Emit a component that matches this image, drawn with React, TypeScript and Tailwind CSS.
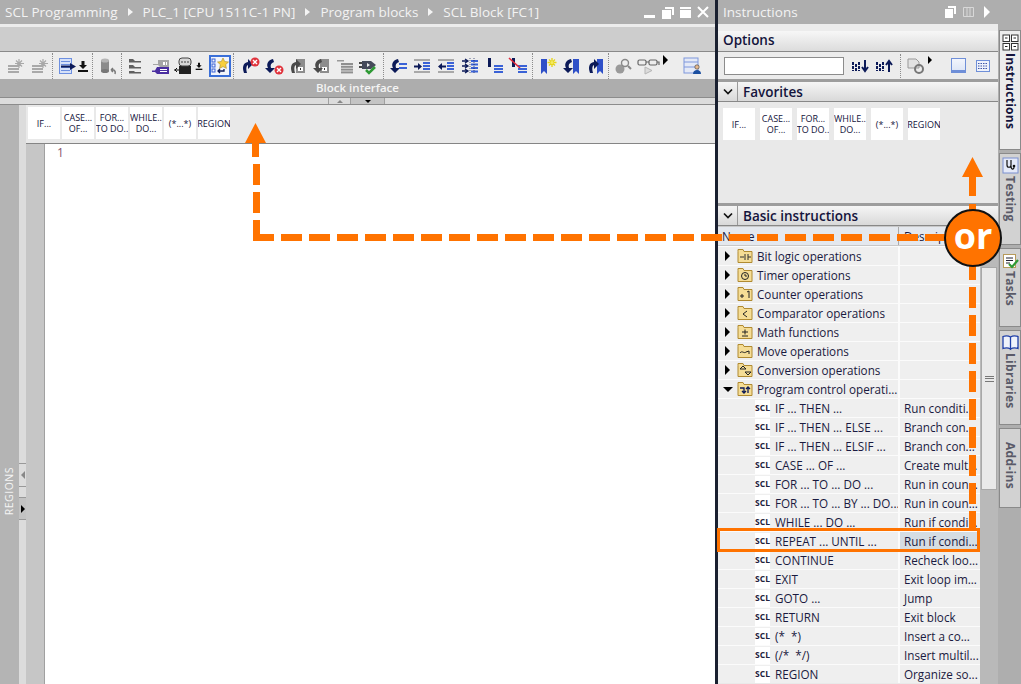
import type { ReactNode } from "react";

const NAVY = "#0c1a58";
const BLUE = "#3a62d6";

const Ico = ({ children, w = 24 }: { children: ReactNode; w?: number }) => (
  <svg width={w} height={20} viewBox={`0 0 ${w} 20`} className="block shrink-0">
    {children}
  </svg>
);

const Rows = ({ x, y, w, n = 3, gap = 4, h = 2, c = BLUE }: { x: number; y: number; w: number; n?: number; gap?: number; h?: number; c?: string }) => (
  <>
    {Array.from({ length: n }).map((_, i) => (
      <rect key={i} x={x} y={y + i * gap} width={w} height={h} fill={c} />
    ))}
  </>
);

const Badge = ({ x, y }: { x: number; y: number }) => (
  <>
    <circle cx={x} cy={y} r={4.5} fill="#e0333c" />
    <path d={`M${x - 2} ${y - 2}l4 4m0-4l-4 4`} stroke="#fff" strokeWidth={1.4} />
  </>
);

// curved arrows for the step/bookmark buttons
const CurveUp = ({ x = 0, y = 0, c = NAVY }: { x?: number; y?: number; c?: string }) => (
  <path transform={`translate(${x} ${y})`} d="M4 17C2 11 3 7 8 6V3l5 5-5 5V9C6 10 6 13 7 17z" fill={c} />
);
const CurveDown = ({ x = 0, y = 0, c = NAVY }: { x?: number; y?: number; c?: string }) => (
  <path transform={`translate(${x} ${y})`} d="M9 3C4 4 2 8 4 12H1l5 5 5-5H7C6 9 7 7 10 6z" fill={c} />
);

const Ghost = () => (
  <Ico>
    <Rows x={5} y={9} w={11} gap={3} h={2} c="#a9a9a9" />
    <path d="M16 3v9M12 7.500h9M13 4.500l6 6m0-6l-6 6" stroke="#a8a8a8" strokeWidth={1.2} />
  </Ico>
);

const Down = () => (
  <svg width={12} height={20} viewBox="0 0 12 20" className="block">
    <path d="M4.500 5h3v4H10l-4 4-4-4h2.500z" fill="#111" />
    <rect x={1} y={14} width={10} height={2} fill="#111" />
  </svg>
);

const DocArrow = () => (
  <svg width={20} height={20} viewBox="0 0 20 20" className="block">
    <rect x={2.500} y={2.500} width={12} height={15} fill="#d6e1f8" stroke="#6d8fe0" />
    <Rows x={4} y={5} w={9} n={4} gap={3} h={1} c="#6d8fe0" />
    <path d="M4 9.500h9V7l6 3.500-6 3.500v-2.500H4z" fill={NAVY} />
  </svg>
);

const Cyl = () => (
  <Ico>
    <rect x={5} y={4} width={8} height={11} fill="#8b8b8b" />
    <ellipse cx={9} cy={4.500} rx={4} ry={2} fill="#b5b5b5" />
    <ellipse cx={9} cy={15} rx={4} ry={2} fill="#777" />
    <path d="M19 18c1-3-1-5-4-4M15 14l2-2m-2 2l2 2" stroke="#777" strokeWidth={1.5} fill="none" />
  </Ico>
);

const GreyLines = () => (
  <Ico>
    <path d="M4 3h4l2 2h6v1.500H4zM4 9h4l2 2h6v1.500H4zM4 15h5l1 1h6v1.500H4z" fill="#5f5f5f" />
  </Ico>
);

const Tag = () => (
  <Ico>
    <path d="M9 4h11v7H11l-2-2H4V8h5z" fill="#a5a5a5" />
    <rect x={14} y={6} width={2} height={3} fill="#fff" />
    <rect x={17} y={6} width={1} height={3} fill="#fff" />
    <path d="M8 11h12v7H8l-2-2H3v-1.500h3z" fill="#4a2ea0" />
    <Rows x={11} y={13} w={7} n={2} gap={2} h={1} c="#fff" />
  </Ico>
);

const Speech = () => (
  <svg width={22} height={20} viewBox="0 0 22 20" className="block">
    <rect x={6} y={10} width={12} height={8} fill="#222" />
    <rect x={6} y={2} width={12} height={8} rx={3} fill="#d8d8d8" stroke="#444" />
    <path d="M8.500 6h1m2 0h1m2 0h1" stroke="#111" strokeWidth={1.5} />
    <path d="M1 14h5m-2-2l-2 2 2 2" stroke="#111" strokeWidth={1} fill="none" />
  </svg>
);

const StarList = () => (
  <div className="flex h-[22px] w-[22px] items-center justify-center border-2 border-[#3a6fd8] bg-[#f2f5fb]">
    <svg width={18} height={18} viewBox="0 0 18 18" className="block">
      <rect x={1} y={2} width={3} height={3} fill="none" stroke={BLUE} />
      <rect x={1} y={7} width={3} height={3} fill="none" stroke={BLUE} />
      <rect x={1} y={12} width={3} height={3} fill="none" stroke={BLUE} />
      <path d="M12 1l1.700 3.500 3.800.5-2.800 2.600.7 3.800L12 9.600 8.600 11.400l.7-3.800L6.500 5l3.800-.5z" fill="#f7cf3c" stroke="#a78a2a" strokeWidth={0.6} />
      <path d="M13 12v2H7m2-2l-2 2 2 2" stroke={NAVY} strokeWidth={1.3} fill="none" />
    </svg>
  </div>
);

const StepOut = () => (
  <Ico>
    <CurveUp x={3} />
    <Badge x={18} y={6} />
  </Ico>
);

const StepIn = () => (
  <Ico>
    <CurveDown x={3} />
    <Badge x={18} y={14} />
  </Ico>
);

const GreyBlock = ({ down }: { down?: boolean }) => (
  <Ico>
    <rect x={11} y={3} width={9} height={14} fill="#8d8d8d" />
    <rect x={13} y={11} width={5} height={4} fill="#fff" />
    <rect x={15} y={12} width={1} height={2} fill="#333" />
    {down ? <CurveDown x={3} c="#4a4a4a" /> : <CurveUp x={3} c="#4a4a4a" />}
  </Ico>
);

const Plug = () => (
  <Ico>
    <path d="M5 5h9l5 4-5 4H5z" fill="#454a5a" />
    <path d="M2 7h3M2 11h3" stroke="#111" strokeWidth={1.3} />
    <path d="M10 7l3 2-3 2z" fill="#eee" />
    <path d="M9 14l3 3 6-6" stroke="#2e9a35" strokeWidth={2.500} fill="none" />
  </Ico>
);

const CurveRows = () => (
  <Ico>
    <CurveDown x={3} />
    <Rows x={13} y={7} w={8} n={2} gap={4} h={2} c={BLUE} />
  </Ico>
);

const Indent = ({ left }: { left?: boolean }) => (
  <Ico>
    <rect x={4} y={3} width={16} height={2} fill="#a9a9a9" />
    <rect x={4} y={15} width={16} height={2} fill="#a9a9a9" />
    <Rows x={13} y={6} w={7} n={3} gap={3} h={2} c={BLUE} />
    <path d={left ? "M4 10.500l4-3.500v2.500h4v2H8V14z" : "M12 10.500L8 7v2.500H4v2h4V14z"} fill={NAVY} />
  </Ico>
);

const Align = () => (
  <Ico>
    <path d="M4 5h6m-3-2l3 2-3 2M4 10h6m-3-2l3 2-3 2M4 15h6m-3-2l3 2-3 2" stroke={NAVY} strokeWidth={1.3} fill="none" />
    <Rows x={13} y={4} w={7} n={4} gap={3.500} h={2} c={BLUE} />
    <path d="M12 2v16M16 2v16" stroke={NAVY} strokeWidth={0.7} strokeDasharray="1 1" />
  </Ico>
);

const LineRows = ({ red }: { red?: boolean }) => (
  <Ico>
    <rect x={6} y={2} width={3} height={9} fill={NAVY} />
    <Rows x={12} y={9} w={9} n={3} gap={3} h={2} />
    {red && <path d="M3 2l11 10" stroke="#e0283a" strokeWidth={1.6} />}
  </Ico>
);

const Ribbon = ({ x, c = "#2f50c8" }: { x: number; c?: string }) => (
  <path d={`M${x} 3h6v15l-3-3-3 3z`} fill={c} />
);

const RibbonNew = () => (
  <Ico>
    <Ribbon x={6} />
    <path d="M17 2v9M12.500 6.500h9M14 3.500l6 6m0-6l-6 6" stroke="#e6d51e" strokeWidth={1.4} />
    <circle cx={17} cy={6.500} r={1.500} fill="#f5ea60" />
  </Ico>
);

const RibbonBack = () => (
  <Ico>
    <Ribbon x={14} />
    <CurveDown x={3} />
  </Ico>
);

const RibbonFwd = () => (
  <Ico>
    <Ribbon x={14} />
    <CurveUp x={3} />
  </Ico>
);

const Magnify = () => (
  <Ico>
    <circle cx={9} cy={13} r={4.500} fill="#9a9a9a" />
    <circle cx={14} cy={7} r={3.500} fill="#eee" stroke="#888" strokeWidth={1.4} />
    <path d="M17 10l3 3" stroke="#888" strokeWidth={2} />
  </Ico>
);

const Glasses = () => (
  <Ico w={26}>
    <rect x={3} y={4} width={8} height={5} rx={1.500} fill="none" stroke="#666" strokeWidth={1.2} />
    <rect x={14} y={4} width={8} height={5} rx={1.500} fill="none" stroke="#666" strokeWidth={1.2} />
    <path d="M11 6h3M22 6h2v3" stroke="#666" strokeWidth={1.2} fill="none" />
    <path d="M10 11l7 3.500-7 3.500z" fill="#dcdcdc" stroke="#b5b5b5" />
  </Ico>
);

const Person = () => (
  <Ico>
    <rect x={4} y={2} width={14} height={15} fill="#e4e9f6" stroke="#7e97dc" />
    <path d="M4 6h14M4 11h14" stroke="#7e97dc" />
    <circle cx={17} cy={11} r={2.200} fill="#e6b98f" stroke="#222" strokeWidth={0.5} />
    <path d="M13 18c0-3 2-4 4-4s4 1 4 4z" fill="#1b4fa0" />
  </Ico>
);

const Sep = ({ className }: { className: string }) => (
  <div className={`h-[26px] w-px border-l border-dotted border-[#8b8b8b] ${className}`} />
);

const Slot = ({ children, className = "w-[24px]" }: { children: ReactNode; className?: string }) => (
  <div className={`flex shrink-0 items-center justify-center ${className}`}>{children}</div>
);

const TopArrow = () => <div className="mb-[12px] h-0 w-0 border-y-[5px] border-l-[5px] border-y-transparent border-l-black" />;

const Toolbar = () => (
  <div className="flex h-[28px] items-center border-t border-[#8a8a8a] bg-[#ededed] pl-[3px]">
    <Slot><Ghost /></Slot>
    <Slot><Ghost /></Slot>
    <Sep className="ml-[1px]" />
    <Slot className="ml-[4px] w-[20px]"><DocArrow /></Slot>
    <Slot className="w-[12px]"><Down /></Slot>
    <Sep className="ml-[3px]" />
    <Slot className="ml-[3px] w-[24px]"><Cyl /></Slot>
    <Sep className="ml-[1px]" />
    <Slot className="ml-[3px] w-[24px]"><GreyLines /></Slot>
    <Slot><Tag /></Slot>
    <Slot className="w-[22px]"><Speech /></Slot>
    <Slot className="w-[8px]"><Down /></Slot>
    <Slot className="ml-[6px] w-[22px]"><StarList /></Slot>
    <Sep className="ml-[2px]" />
    <Slot className="ml-[3px] w-[24px]"><StepOut /></Slot>
    <Slot><StepIn /></Slot>
    <Slot><GreyBlock /></Slot>
    <Slot><GreyBlock down /></Slot>
    <Slot>
      <Ico>
        <path d="M4 4h7v1.500H4z" fill="#999" />
        <Rows x={8} y={7} w={12} n={4} gap={2.800} h={2} c="#8f8f8f" />
      </Ico>
    </Slot>
    <Slot><Plug /></Slot>
    <Sep className="ml-[2px]" />
    <Slot className="ml-[2px] w-[24px]"><CurveRows /></Slot>
    <Slot><Indent /></Slot>
    <Slot><Indent left /></Slot>
    <Slot><Align /></Slot>
    <Slot><LineRows /></Slot>
    <Slot><LineRows red /></Slot>
    <Sep className="ml-[2px]" />
    <Slot className="ml-[2px] w-[24px]"><RibbonNew /></Slot>
    <Slot><RibbonBack /></Slot>
    <Slot><RibbonFwd /></Slot>
    <Sep className="ml-[1px]" />
    <Slot className="ml-[2px] w-[24px]"><Magnify /></Slot>
    <Slot className="ml-[1px] w-[24px]"><Glasses /></Slot>
    <Slot className="w-[10px]"><TopArrow /></Slot>
    <Slot className="ml-[10px] w-[24px]"><Person /></Slot>
  </div>
);

const Tile = ({ top, bottom }: { top: string; bottom?: string }) => (
  <div className="flex h-[32px] w-[32px] shrink-0 flex-col items-center justify-center overflow-hidden bg-white text-center text-[9px] leading-[11px] text-[#14143c]">
    <span className="whitespace-nowrap">{top}</span>
    {bottom && <span className="whitespace-nowrap">{bottom}</span>}
  </div>
);

const Tiles = ({ gap }: { gap: string }) => (
  <div className={`flex ${gap}`}>
    <Tile top="IF..." />
    <Tile top="CASE..." bottom="OF..." />
    <Tile top="FOR..." bottom="TO DO.." />
    <Tile top="WHILE.." bottom="DO..." />
    <Tile top="(*...*)" />
    <Tile top="REGION" />
  </div>
);

const TitleArrow = () => <span className="block h-0 w-0 border-y-[4px] border-l-[5px] border-y-transparent border-l-[#f4f4f4]" />;

const Editor = () => (
  <div className="flex h-full w-[715px] shrink-0 flex-col">
    <div className="flex h-[24px] items-center justify-between bg-[#aeaeae] pl-[5px] pr-[6px] text-[13.500px] text-[#f3f3f3]">
      <div className="flex items-center whitespace-nowrap">
        <span>SCL Programming</span>
        <span className="mx-[10px]"><TitleArrow /></span>
        <span>PLC_1 [CPU 1511C-1 PN]</span>
        <span className="mx-[10px]"><TitleArrow /></span>
        <span>Program blocks</span>
        <span className="mx-[10px]"><TitleArrow /></span>
        <span>SCL Block [FC1]</span>
      </div>
      <div className="flex items-center gap-[6px]">
        <svg width={66} height={14} viewBox="0 0 66 14" className="block">
          <rect x={1} y={10} width={11} height={3} fill="#fff" />
          <path d="M22 2h9v8h-2V4h-7z" fill="#fff" />
          <rect x={19} y={5} width={9} height={9} fill="#fff" />
          <rect x={37} y={2} width={11} height={11} fill="#fff" />
          <rect x={37} y={4} width={11} height={1} fill="#aeaeae" />
          <path d="M55 2l10 10m0-10L55 12" stroke="#fff" strokeWidth={2} />
        </svg>
      </div>
    </div>
    <div className="h-[3px] bg-[#ececec]" />
    <div className="h-[24px] bg-[#cdcdcd]" />
    <Toolbar />
    <div className="flex h-[18px] items-center justify-center bg-[#adadad] text-[11.500px] font-semibold text-[#f4f4f4]">Block interface</div>
    <div className="flex h-[8px] items-start border-y border-[#8c8c8c] bg-[#dcdcdc]">
      <div className="ml-[328px] flex h-[6px] w-[23px] items-center justify-center border-x border-[#a0a0a0]">
        <span className="h-0 w-0 border-x-[3px] border-b-[3px] border-x-transparent border-b-[#888]" />
      </div>
      <div className="flex h-[6px] w-[34px] items-center justify-center border-r border-[#a0a0a0] bg-[#c4c4c4]">
        <span className="h-0 w-0 border-x-[3px] border-t-[3px] border-x-transparent border-t-black" />
      </div>
    </div>
    <div className="flex min-h-0 flex-1">
      <div className="flex w-[19px] shrink-0 justify-center bg-[#b4b4b4] pt-[362px]">
        <span className="h-max rotate-180 text-[10.500px] tracking-[0.5px] text-[#f4f4f4] [writing-mode:vertical-rl]">REGIONS</span>
      </div>
      <div className="flex w-[7px] shrink-0 flex-col bg-[#dcdcdc] pt-[358px]">
        <div className="flex h-[23px] items-center justify-center border-t border-[#999]">
          <span className="h-0 w-0 border-y-[4px] border-r-[4px] border-y-transparent border-r-[#888]" />
        </div>
        <div className="h-[11px] border-t border-[#999]" />
        <div className="flex h-[23px] items-center justify-center border-y border-[#999] bg-[#c2c2c2]">
          <span className="h-0 w-0 border-y-[4px] border-l-[4px] border-y-transparent border-l-black" />
        </div>
      </div>
      <div className="flex min-w-0 flex-1 flex-col">
        <div className="h-[39px] border-b border-[#858585] bg-[#e9e9e9] py-[2px] pl-[2px]">
          <Tiles gap="gap-[2px]" />
        </div>
        <div className="flex flex-1">
          <div className="w-[19px] border-r border-[#a0a0a0] bg-[#c6c6c6]" />
          <div className="flex-1 bg-white pl-[12px] pt-[1px] text-[12px] leading-[16px] text-[#86566e]">1</div>
        </div>
      </div>
    </div>
  </div>
);

const Chevron = () => (
  <div className="flex h-full w-[20px] items-center justify-center border-r border-[#9a9a9a]">
    <svg width={10} height={8} viewBox="0 0 10 8" className="block">
      <path d="M1 1.500l4 4 4-4" stroke="#111" strokeWidth={1.7} fill="none" />
    </svg>
  </div>
);

const Section = ({ title }: { title: string }) => (
  <div className="border-t-[3px] border-[#9d9d9d]">
    <div className="flex h-[20px] items-center border-b border-[#888] bg-linear-to-b from-[#f5f5f5] to-[#d9d9d9] text-[13.500px] font-semibold text-[#14143c]">
      <Chevron />
      <span className="pl-[5px] pt-[1px]">{title}</span>
    </div>
  </div>
);

const glyphs: Record<string, ReactNode> = {
  bit: <path d="M3 9h4M8 6v6M11 6v6M11 9h3" stroke="#333" fill="none" />,
  timer: <><circle cx={8} cy={9} r={3.500} fill="none" stroke="#222" /><path d="M8 7v2h2" stroke="#222" fill="none" /></>,
  counter: <path d="M3 10h4M5 8v4M10 6l2-1v7" stroke="#222" fill="none" />,
  comp: <path d="M10 6L6 9l4 3" stroke="#222" fill="none" />,
  math: <path d="M5 8h6M8 5.500v5M5 12h6" stroke="#222" fill="none" />,
  move: <path d="M3 10c2-3 4 1 6-1l3-1m0 0v3" stroke="#222" fill="none" />,
  conv: <path d="M3 7l3-3 3 3zM8 10h6l-3 3z" fill="none" stroke="#222" />,
  prog: <path d="M3 7h4v5m-2-2l2 2 2-2M9 8l2-2 2 2m-2-2v6" stroke={NAVY} fill="none" strokeWidth={1.3} />,
};

const Folder = ({ g }: { g: string }) => (
  <svg width={16} height={16} viewBox="0 0 16 16" className="block shrink-0">
    <path d="M1 3.500V1.500h5l1 2h8v11H1z" fill="#f5dd96" stroke="#b08a30" />
    {glyphs[g]}
  </svg>
);

const folders: [string, string][] = [
  ["bit", "Bit logic operations"],
  ["timer", "Timer operations"],
  ["counter", "Counter operations"],
  ["comp", "Comparator operations"],
  ["math", "Math functions"],
  ["move", "Move operations"],
  ["conv", "Conversion operations"],
  ["prog", "Program control operati..."],
];

const commands: [string, string][] = [
  ["IF ... THEN ...", "Run conditi..."],
  ["IF ... THEN ... ELSE ...", "Branch con..."],
  ["IF ... THEN ... ELSIF ...", "Branch con..."],
  ["CASE ... OF ...", "Create mult..."],
  ["FOR ... TO ... DO ...", "Run in coun..."],
  ["FOR ... TO ... BY ... DO...", "Run in coun..."],
  ["WHILE ... DO ...", "Run if condi..."],
  ["REPEAT ... UNTIL ...", "Run if condi..."],
  ["CONTINUE", "Recheck loo..."],
  ["EXIT", "Exit loop im..."],
  ["GOTO ...", "Jump"],
  ["RETURN", "Exit block"],
  ["(*  *)", "Insert a co..."],
  ["(/*  */)", "Insert multil..."],
  ["REGION", "Organize so..."],
];

const TreeRow = ({ name, desc, open, g, selected }: { name: string; desc?: string; open?: boolean; g?: string; selected?: boolean }) => (
  <div className="flex h-[19px] shrink-0 border-t border-[#fbfbfb] bg-[#efefef] text-[11.700px] leading-[18px] text-[#1a1a40]">
    <div className="flex w-[182px] shrink-0 items-center overflow-hidden whitespace-nowrap border-r-2 border-[#fbfbfb]">
      {g ? (
        <>
          <div className="flex w-[19px] shrink-0 justify-center">
            {open ? (
              <span className="h-0 w-0 border-x-[5px] border-t-[5px] border-x-transparent border-t-black" />
            ) : (
              <span className="h-0 w-0 border-y-[5px] border-l-[5px] border-y-transparent border-l-black" />
            )}
          </div>
          <Folder g={g} />
          <span className="pl-[4px]">{name}</span>
        </>
      ) : (
        <>
          <div className="ml-[37px] flex h-[17px] w-[15px] shrink-0 items-center justify-center bg-white text-[8.500px] font-bold leading-none text-[#22223c]">SCL</div>
          <span className="whitespace-pre pl-[5px]">{name}</span>
        </>
      )}
    </div>
    <div className={`min-w-0 flex-1 overflow-hidden whitespace-nowrap pl-[4px] ${selected ? "bg-[#d5dde3]" : ""}`}>{desc}</div>
  </div>
);

const InstructionsPanel = () => (
  <div className="flex h-full w-[280px] shrink-0 flex-col bg-[#e9e9e9]">
    <div className="flex h-[24px] shrink-0 items-center justify-between bg-[#aeaeae] pl-[5px] pr-[8px] text-[13.500px] text-[#f3f3f3]">
      <span>Instructions</span>
      <svg width={46} height={14} viewBox="0 0 46 14" className="block">
        <path d="M4 1h8v8h-2V3H4z" fill="#fff" />
        <rect x={1} y={4} width={8} height={9} fill="#fff" />
        <path d="M19.500 2.500h10v9h-10zM23 2.500v9M26 2.500v9" stroke="#d8d8d8" fill="none" />
        <path d="M40 1l6 6-6 6z" fill="#fff" />
      </svg>
    </div>
    <div className="h-[7px] shrink-0 bg-[#ececec]" />
    <div className="flex h-[21px] shrink-0 items-center border-b border-[#888] bg-linear-to-b from-[#f7f7f7] to-[#dcdcdc] pb-[2px] pl-[5px] text-[13.500px] font-semibold text-[#14143c]">Options</div>
    <div className="flex h-[27px] shrink-0 items-center bg-[#ececec]">
      <div className="ml-[6px] h-[18px] w-[120px] border border-[#8c8c8c] bg-white" />
      <svg width={22} height={20} viewBox="0 0 22 20" className="ml-[6px] block">
        <path d="M3 6v9M6 8v7M9 6v9" stroke={NAVY} strokeWidth={2} strokeDasharray="3 1" />
        <path d="M15 4v10m-3-3l3 4 3-4" stroke={NAVY} strokeWidth={2} fill="none" />
      </svg>
      <svg width={22} height={20} viewBox="0 0 22 20" className="ml-[2px] block">
        <path d="M3 6v9M6 8v7M9 6v9" stroke={NAVY} strokeWidth={2} strokeDasharray="3 1" />
        <path d="M15 16V6m-3 3l3-4 3 4" stroke={NAVY} strokeWidth={2} fill="none" />
      </svg>
      <div className="ml-[4px] h-[24px] w-px border-l border-dotted border-[#8b8b8b]" />
      <svg width={22} height={20} viewBox="0 0 22 20" className="ml-[4px] block">
        <path d="M3 3h8l3 3v6H3z" fill="#e2e2e2" stroke="#999" />
        <circle cx={14} cy={13} r={4} fill="none" stroke="#777" strokeWidth={2} />
      </svg>
      <div className="mb-[12px] ml-[1px] h-0 w-0 border-y-[4px] border-l-[4px] border-y-transparent border-l-black" />
      <div className="ml-[19px] h-[15px] w-[15px] border border-[#6f8fd8] bg-linear-to-b from-[#f2f5fc] to-[#dbe4f6] shadow-[inset_0_-2px_0_#6f8fd8]" />
      <svg width={16} height={16} viewBox="0 0 16 16" className="ml-[9px] block">
        <rect x={1.500} y={2.500} width={13} height={11} fill="#eef2fb" stroke="#6f8fd8" />
        <path d="M3 5.500h10M3 8h10M3 10.500h10" stroke="#3d55a8" strokeDasharray="1.500 1" />
      </svg>
    </div>
    <Section title="Favorites" />
    <div className="h-[101px] shrink-0 pl-[5px] pt-[6px]">
      <Tiles gap="gap-[5px]" />
    </div>
    <Section title="Basic instructions" />
    <div className="flex h-[20px] shrink-0 border-y border-[#c8c8c8] bg-[#e4e8ee] text-[11.700px] leading-[18px] text-[#1a1a40]">
      <div className="w-[181px] border-r border-[#aaa] pl-[4px]">Name</div>
      <div className="pl-[5px]">Description</div>
    </div>
    <div className="flex min-h-0 flex-1">
      <div className="flex w-[262px] shrink-0 flex-col overflow-hidden">
        {folders.map(([g, n], i) => (
          <TreeRow key={n} name={n} g={g} open={i === 7} />
        ))}
        {commands.map(([n, d]) => (
          <TreeRow key={n} name={n} desc={d} selected={n.startsWith("REPEAT")} />
        ))}
      </div>
      <div className="flex flex-1 flex-col bg-[#b9b9b9] pl-px pr-[1px] pt-[21px]">
        <div className="flex h-[223px] items-center justify-center border border-[#a8a8a8] bg-[#e9e9e9]">
          <div className="h-[6px] w-[9px] border-y border-[#777] py-[1px]">
            <div className="h-[1px] bg-[#777]" />
          </div>
        </div>
      </div>
    </div>
  </div>
);

const SideTab = ({ label, h, icon, active }: { label: string; h: string; icon?: ReactNode; active?: boolean }) => (
  <div className={`flex w-[22px] shrink-0 flex-col items-center border border-[#8a8a8a] ${icon ? "pt-[3px]" : "pt-[11px]"} ${h} ${active ? "bg-[#ececec]" : "bg-[#d2d2d2]"}`}>
    {icon && <div className="h-[17px] w-[17px]">{icon}</div>}
    <span className={`pt-[2px] text-[12px] font-bold leading-[20px] tracking-[0.3px] [writing-mode:vertical-rl] ${active ? "text-[#14143c]" : "text-[#5a5a68]"}`}>{label}</span>
  </div>
);

const SideTabs = () => (
  <div className="flex h-full w-[23px] shrink-0 flex-col gap-[3px] bg-[#aeaeae] pl-px pt-[30px]">
    <SideTab
      label="Instructions"
      h="h-[120px]"
      active
      icon={
        <svg width={17} height={17} viewBox="0 0 17 17" className="block">
          <rect x={1} y={1} width={6.500} height={6.500} fill="#fff" stroke="#333" />
          <rect x={9.500} y={1} width={6.500} height={6.500} fill="#fff" stroke="#333" />
          <rect x={1} y={9.500} width={6.500} height={6.500} fill="#fff" stroke="#333" />
          <rect x={9.500} y={9.500} width={6.500} height={6.500} fill="#fff" stroke="#333" />
          <path d="M3 4h2.500M11.500 4H14M3 12.500h2.500M11.500 12.500H14" stroke="#222" />
        </svg>
      }
    />
    <SideTab
      label="Testing"
      h="h-[92px]"
      icon={
        <svg width={17} height={17} viewBox="0 0 17 17" className="block">
          <rect x={1} y={1} width={15} height={15} fill="#e4e9f8" stroke="#7b8fd0" />
          <path d="M5 3v5c0 3 4 3 4 0V3M9 9c0 4 3 4 3 1" stroke="#111" strokeWidth={1.2} fill="none" />
          <circle cx={12} cy={9} r={1.300} fill="#111" />
        </svg>
      }
    />
    <SideTab
      label="Tasks"
      h="h-[79px]"
      icon={
        <svg width={17} height={17} viewBox="0 0 17 17" className="block">
          <rect x={1.500} y={2.500} width={12} height={13} fill="#fff" stroke="#b79a5a" />
          <path d="M4 6h7M4 8.500h7M4 11h4" stroke="#223" />
          <path d="M7 12l3 3 6-7" stroke="#2e9a35" strokeWidth={2.200} fill="none" />
        </svg>
      }
    />
    <SideTab
      label="Libraries"
      h="h-[95px]"
      icon={
        <svg width={17} height={17} viewBox="0 0 17 17" className="block">
          <path d="M1 2.500c3-1 5-1 7.500.5v12c-2.500-1.500-4.500-1.500-7.500-.5zM16 2.500c-3-1-5-1-7.500.5v12c2.500-1.500 4.500-1.500 7.500-.5z" fill="#eef2fb" stroke="#1f3fa8" strokeWidth={1.3} />
        </svg>
      }
    />
    <SideTab label="Add-ins" h="h-[80px]" />
  </div>
);

const OrangeGuide = () => (
  <>
    <svg width={1021} height={684} viewBox="0 0 1021 684" className="pointer-events-none absolute left-0 top-0">
      <path d="M255.500 123l10.500 20h-7v14h-7v-14h-7z" fill="#ff7300" />
      <path d="M256.500 164V241" stroke="#ff7300" strokeWidth={7} fill="none" strokeDasharray="21 7" />
      <path d="M253 237.500H945" stroke="#ff7300" strokeWidth={7} fill="none" strokeDasharray="21 7" />
      <path d="M972.500 157l10.500 20h-7v19h-7v-19h-7z" fill="#ff7300" />
      <path d="M972.500 204v6M972.500 259V529" stroke="#ff7300" strokeWidth={7} fill="none" strokeDasharray="21 7" />
      <rect x={718.500} y={529.500} width={260} height={21} fill="none" stroke="#ff7300" strokeWidth={3} />
    </svg>
    <div className="absolute left-[944px] top-[209px] flex h-[58px] w-[58px] items-center justify-center rounded-full border-2 border-[#111] bg-[#ff7300] pb-[5px] text-[36px] font-bold leading-none text-white">
      or
    </div>
  </>
);

export default function App() {
  return (
    <div className="relative flex h-[684px] w-[1021px] overflow-hidden bg-white font-['Open_Sans','Noto_Sans',sans-serif]">
      <Editor />
      <div className="w-[3px] shrink-0 bg-[#1a2030]" />
      <InstructionsPanel />
      <SideTabs />
      <OrangeGuide />
    </div>
  );
}
